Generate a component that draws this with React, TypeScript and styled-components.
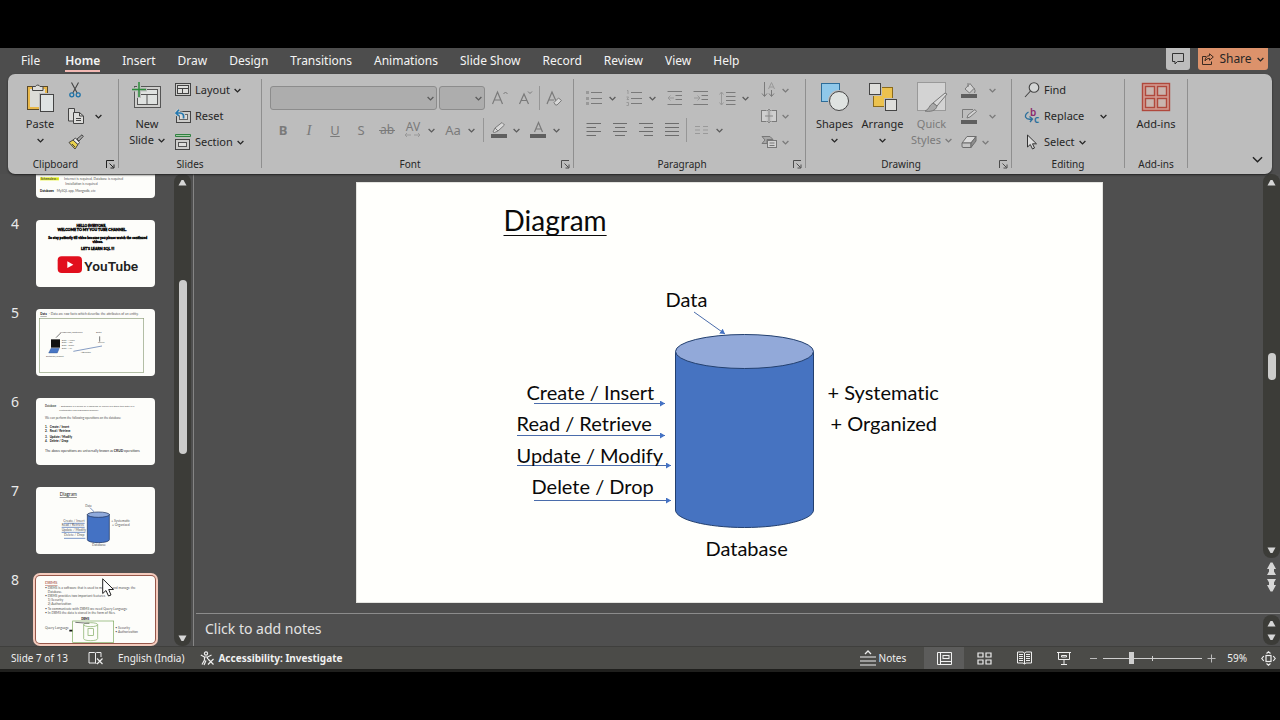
import React from "react";
import styled, { createGlobalStyle, css } from "styled-components";

const Global = createGlobalStyle`
  * { box-sizing: border-box; }
  body { margin: 0; background: #000; }
  button, select, input, textarea { font: inherit; color: inherit; margin: 0; }
`;

const ui = `"Noto Sans", "Open Sans", sans-serif`;
const ink = "#262626";
const dim = "#7a7a7a";

/* ---------- frame ---------- */

const Frame = styled.div`
  height: 100vh;
  min-height: 560px;
  padding: 48px 0;
  background: #000;
  display: flex;
  flex-direction: column;
  font-family: ${ui};
  font-size: 11px;
  color: ${ink};
`;

const TabBar = styled.nav`
  height: 26px;
  flex: none;
  display: flex;
  align-items: flex-start;
  padding: 0 12px 0 21px;
  background: #4d4d4d;
`;

const Tab = styled.a<{ $active?: boolean }>`
  color: #f4f4f4;
  text-decoration: none;
  font-size: 12px;
  line-height: 25px;
  margin-right: 22px;
  ${(p) =>
    p.$active &&
    css`
      font-weight: 600;
      line-height: 19px;
      padding-top: 3px;
      border-bottom: 2px solid #f3b9b4;
      margin-left: 3px;
    `}
`;

const TabActions = styled.div`
  margin-left: auto;
  display: flex;
  gap: 8px;
`;

const TopButton = styled.button<{ $accent?: boolean }>`
  height: 22px;
  border: 0;
  border-radius: 0 0 3px 3px;
  padding: 0 4px;
  min-width: ${(p) => (p.$accent ? 70 : 24)}px;
  display: flex;
  align-items: center;
  justify-content: center;
  gap: 5px;
  font-size: 12px;
  line-height: 22px;
  background: ${(p) => (p.$accent ? "#dc926b" : "#bdbdbd")};
`;

/* ---------- ribbon ---------- */

const Ribbon = styled.section`
  height: 100px;
  flex: none;
  margin: 0 8px;
  padding: 3px 0 1px;
  display: flex;
  background: #bdbdbd;
  border-radius: 7px;
  box-shadow: 0 1px 2px #222;
  position: relative;
  z-index: 2;
`;

const RibbonBack = styled.div`
  background: #4d4d4d;
  flex: none;
`;

const Group = styled.div<{ $w: number }>`
  width: ${(p) => p.$w}px;
  flex: none;
  display: flex;
  flex-direction: column;
`;

const GroupBody = styled.div<{ $pad?: number }>`
  height: 78px;
  display: flex;
  padding-left: ${(p) => p.$pad ?? 0}px;
`;

const GroupFooter = styled.div`
  height: 18px;
  display: flex;
  align-items: center;
`;

const GroupName = styled.span`
  flex: 1;
  text-align: center;
  font-size: 10px;
  line-height: 18px;
`;

const Launcher = styled.button`
  width: 15px;
  height: 16px;
  padding: 0;
  border: 0;
  background: none;
  display: flex;
  align-items: center;
  justify-content: center;
`;

const Divider = styled.div`
  width: 1px;
  flex: none;
  height: 89px;
  margin-top: 2px;
  background: #8f8f8f;
`;

const BigButton = styled.button<{ $w: number; $dim?: boolean }>`
  width: ${(p) => p.$w}px;
  border: 0;
  background: none;
  padding: 5px 0 0;
  display: flex;
  flex-direction: column;
  align-items: center;
  line-height: 16px;
  color: ${(p) => (p.$dim ? dim : ink)};
  svg:first-child { margin-bottom: 4px; }
`;

const BigLine = styled.span`
  height: 16px;
  display: flex;
  align-items: center;
  gap: 4px;
  svg:first-child { margin-bottom: 0; }
`;

const Stack = styled.div<{ $left?: number }>`
  display: flex;
  flex-direction: column;
  margin-left: ${(p) => p.$left ?? 0}px;
`;

const Row = styled.button<{ $gap?: number; $dim?: boolean }>`
  height: 26px;
  border: 0;
  padding: 0;
  background: none;
  display: flex;
  align-items: center;
  gap: ${(p) => p.$gap ?? 4}px;
  line-height: 16px;
  color: ${(p) => (p.$dim ? dim : ink)};
`;

const ToolRows = styled.div`
  display: flex;
  flex-direction: column;
  padding-top: 5px;
`;

const ToolRow = styled.div`
  height: 32px;
  display: flex;
  align-items: center;
`;

const Tool = styled.button<{ $left?: number }>`
  min-width: 26px;
  height: 26px;
  margin-left: ${(p) => p.$left ?? 0}px;
  padding: 0;
  border: 0;
  background: none;
  color: ${dim};
  display: flex;
  align-items: center;
  justify-content: center;
`;

const ToolText = styled.span<{ $bold?: boolean; $italic?: boolean; $line?: string }>`
  font-size: ${(p) => (p.$italic ? 15 : 13)}px;
  line-height: 16px;
  font-weight: ${(p) => (p.$bold ? 700 : 400)};
  font-style: ${(p) => (p.$italic ? "italic" : "normal")};
  font-family: ${(p) => (p.$italic ? `"Liberation Serif", serif` : ui)};
  text-decoration: ${(p) => p.$line ?? "none"};
`;

const Drop = styled.button`
  width: 10px;
  height: 26px;
  border: 0;
  padding: 0;
  background: none;
  color: #5c5c5c;
  display: flex;
  align-items: center;
  justify-content: center;
`;

const MiniRule = styled.div<{ $left: number }>`
  width: 1px;
  height: 24px;
  background: #969696;
  margin: 0 1px 0 ${(p) => p.$left}px;
`;

const Combo = styled.label<{ $w: number }>`
  width: ${(p) => p.$w}px;
  height: 24px;
  margin-right: 2px;
  border: 1px solid #8c8c8c;
  border-radius: 3px;
  background: #adadad;
  display: flex;
  align-items: center;
  padding-right: 2px;
  color: #5c5c5c;
  select {
    appearance: none;
    flex: 1;
    min-width: 0;
    border: 0;
    background: none;
    height: 20px;
  }
`;

const Collapse = styled.button`
  margin: auto 8px 6px auto;
  border: 0;
  padding: 0;
  background: none;
  width: 14px;
  height: 14px;
  color: #222;
`;

/* ---------- workspace ---------- */

const Workspace = styled.main`
  flex: 1;
  min-height: 0;
  display: flex;
  background: #4f4f4f;
`;

const SlidePane = styled.aside`
  width: 194px;
  flex: none;
  display: flex;
  border-right: 1px solid #858585;
`;

const ThumbList = styled.ol`
  flex: 1;
  margin: 0;
  padding: 0 0 3px 11px;
  list-style: none;
  display: flex;
  flex-direction: column;
  justify-content: flex-end;
  gap: 22px;
  overflow: hidden;
`;

const ThumbItem = styled.li`
  flex: none;
  display: flex;
  gap: 15px;
  position: relative;
`;

const ThumbNo = styled.span`
  width: 10px;
  font-size: 14px;
  line-height: 7px;
  color: #eaeaea;
`;

const Thumb = styled.a<{ $on?: boolean }>`
  display: block;
  width: 119px;
  height: 67px;
  background: #fdfdfa;
  border-radius: 4px;
  overflow: hidden;
  ${(p) => p.$on && "box-shadow: 0 0 0 1px #96574a, 0 0 0 3px #f4cbbd;"}
  svg { display: block; }
`;

const Pointer = styled.svg`
  position: absolute;
  left: 91px;
  top: 2px;
`;

const ScrollTrack = styled.div<{ $w: number }>`
  width: ${(p) => p.$w}px;
  flex: 1;
  min-height: 0;
  background: #3c3c38;
  border-radius: 8px;
  display: flex;
  flex-direction: column;
  align-items: center;
  justify-content: space-between;
  padding: 4px 0 3px;
`;

const ScrollArrow = styled.button<{ $tall?: boolean }>`
  width: 12px;
  height: ${(p) => (p.$tall ? 13 : 9)}px;
  border: 0;
  padding: 0;
  background: none;
  color: #d6d6d6;
  display: flex;
  align-items: center;
  justify-content: center;
`;

const ScrollThumb = styled.div<{ $h: number }>`
  width: 8px;
  height: ${(p) => p.$h}px;
  border-radius: 4px;
  background: #cccccb;
`;

const LeftScroll = styled.div`
  width: 17px;
  margin-right: 2px;
  display: flex;
`;

const Spring = styled.div<{ $n: number }>`
  flex: ${(p) => p.$n};
`;

const Editor = styled.div`
  flex: 1;
  min-width: 0;
  display: flex;
  flex-direction: column;
`;

const Stage = styled.div`
  flex: 1;
  min-height: 0;
  display: flex;
`;

const StageArea = styled.div`
  flex: 1;
  display: flex;
  justify-content: center;
  padding: 8px 0 0 1px;
`;

const StageScroll = styled.div`
  width: 17px;
  display: flex;
  flex-direction: column;
  align-items: center;
  gap: 4px;
  padding-bottom: 21px;
`;

const Notes = styled.div`
  height: 33px;
  flex: none;
  border-top: 1px solid #8c8c8c;
  margin-left: 2px;
  display: flex;
  align-items: stretch;
  textarea {
    flex: 1;
    resize: none;
    border: 0;
    outline: 0;
    background: none;
    padding: 4px 9px;
    font-size: 14px;
    line-height: 22px;
    overflow: hidden;
  }
  textarea::placeholder { color: #e3e3e3; opacity: 1; }
`;

const NotesScroll = styled.div`
  width: 17px;
  display: flex;
  padding: 1px 0;
`;

/* ---------- slide ---------- */

const Slide = styled.article`
  width: 747px;
  height: 421px;
  flex: none;
  position: relative;
  background: #fffffc;
  border: 1px solid #e4e4e0;
  color: #0a0a0a;
  font-family: Lato, sans-serif;
  font-variant-ligatures: none;
`;

const SlideArt = styled.svg`
  position: absolute;
  left: -1px;
  top: -1px;
`;

const TextBox = styled.p<{ $x: number; $y: number }>`
  position: absolute;
  left: ${(p) => p.$x}px;
  top: ${(p) => p.$y}px;
  margin: 0;
  font-size: 20px;
  line-height: 24px;
  white-space: nowrap;
`;

const SlideTitle = styled.h1`
  position: absolute;
  left: 147px;
  top: 20px;
  margin: 0;
  font-size: 28px;
  line-height: 34px;
  font-weight: 400;
  text-decoration: underline 1px;
  text-decoration-skip-ink: none;
  text-underline-offset: 4px;
`;

/* ---------- status bar ---------- */

const StatusBar = styled.footer`
  height: 26px;
  flex: none;
  border-top: 1px solid #3f3f3d;
  border-bottom: 3px solid #1f1f1d;
  background: #4b4b48;
  color: #f0f0f0;
  font-size: 10px;
  display: flex;
  align-items: center;
  padding: 0 4px 0 11px;
`;

const StatusItem = styled.button<{ $left?: number; $right?: number; $bold?: boolean }>`
  border: 0;
  padding: 0;
  background: none;
  margin-left: ${(p) => p.$left ?? 0}px;
  margin-right: ${(p) => p.$right ?? 0}px;
  font-weight: ${(p) => (p.$bold ? 700 : 400)};
  display: flex;
  align-items: center;
  gap: 3px;
`;

const ViewButton = styled.button<{ $on?: boolean }>`
  width: 40px;
  height: 22px;
  border: 0;
  padding: 0;
  background: ${(p) => (p.$on ? "#5c5c5b" : "none")};
  display: flex;
  align-items: center;
  justify-content: center;
`;

const Zoom = styled.input`
  appearance: none;
  width: 99px;
  height: 14px;
  margin: 0 5px;
  background:
    linear-gradient(#cfcfcf, #cfcfcf) 49px 50% / 1px 5px no-repeat,
    linear-gradient(#cfcfcf, #cfcfcf) 0 50% / 100% 1px no-repeat;
  &::-webkit-slider-thumb {
    appearance: none;
    width: 5px;
    height: 12px;
    background: #cfcfcf;
  }
`;

/* ---------- icons ---------- */

const Chevron = ({ size = 7 }: { size?: number }) => (
  <svg width={size} height={size} viewBox="0 0 7 7" fill="none" stroke="currentColor" strokeWidth={size > 7 ? 0.9 : 1.3}>
    <path d="M0.6 2 L3.5 4.9 L6.4 2" />
  </svg>
);

const LaunchIcon = ({ c = "#4c4c4c" }: { c?: string }) => (
  <svg width="9" height="9" viewBox="0 0 9 9" fill="none" stroke={c}>
    <path d="M0.5 8V0.5H8 M3.5 3.5L7.5 7.5 M8 4.5V8H4.5" />
  </svg>
);

const PasteIcon = () => (
  <svg width="30" height="30" viewBox="0 0 30 30" fill="none">
    <rect x="2.5" y="4.5" width="20" height="23" fill="#e9b84a" stroke="#5a4a2a" />
    <rect x="5" y="7" width="15" height="18" fill="#dcdcd8" />
    <path d="M7.5 8.5V4.5H10.5A2.5 2.5 0 0 1 15 4.5H18V8.5Z" fill="#dededb" stroke="#444" />
    <rect x="14" y="11" width="15" height="19" fill="#bdbdbd" />
    <rect x="15.5" y="12.5" width="13" height="17" fill="#dfe3e3" stroke="#444" />
  </svg>
);

const CutIcon = () => (
  <svg width="14" height="18" viewBox="0 0 14 18" fill="none">
    <path d="M3.5 1.5L9.2 12 M10.5 1.5L4.800 12" stroke="#444" strokeWidth="1.1" />
    <circle cx="3.8" cy="13.8" r="2" stroke="#1f73a8" strokeWidth="1.3" />
    <circle cx="10.2" cy="13.8" r="2" stroke="#1f73a8" strokeWidth="1.3" />
  </svg>
);

const CopyIcon = () => (
  <svg width="16" height="16" viewBox="0 0 16 16" fill="#dcdcda" stroke="#444">
    <path d="M0.5 0.5H6.5V13H0.5Z" />
    <path d="M5.500 4.500H11.500L15.500 8V15.500H5.500Z" />
    <path d="M11.500 4.500V8H15.500 M8 10.500H13 M8 12.500H13" fill="none" />
  </svg>
);

const BrushIcon = () => (
  <svg width="16" height="16" viewBox="0 0 16 16" fill="none" stroke="#444">
    <path d="M1 8.500L5 6L10 10.500L7 15Z" fill="#e8d04c" />
    <path d="M5 6L7.500 4L11.500 8.500L10 10.500Z" fill="#eee" />
    <path d="M9 5L14 0.800L15.300 2.300L11 7Z" fill="#aaa" />
    <path d="M4 10L7 13" />
  </svg>
);

const NewSlideIcon = () => (
  <svg width="32" height="30" viewBox="0 0 32 30" fill="none">
    <rect x="3.500" y="4.500" width="26" height="21" fill="#cfcfcd" stroke="#555" />
    <rect x="6.500" y="7.500" width="20" height="15" fill="#dfe2e0" stroke="#555" />
    <path d="M6.500 12.500H26.500 M16 12.500V22.500" stroke="#555" />
    <path d="M8 0V16 M0 7.500H16" stroke="#bdbdbd" strokeWidth="4" />
    <path d="M8 0V15 M1 7.500H15" stroke="#2b8c3a" strokeWidth="1.500" />
  </svg>
);

const LayoutIcon = () => (
  <svg width="16" height="14" viewBox="0 0 16 14" fill="none" stroke="#444">
    <rect x="0.500" y="0.500" width="15" height="12" fill="#cdcdcb" />
    <rect x="2.500" y="2.500" width="11" height="8" fill="#dededc" />
    <path d="M2.500 5.500H13.500 M7.500 5V10.500" />
  </svg>
);

const ResetIcon = () => (
  <svg width="16" height="15" viewBox="0 0 16 15" fill="none">
    <rect x="1.500" y="2.500" width="14" height="11" fill="#cdcdcb" stroke="#444" />
    <rect x="4.500" y="5.500" width="8" height="5" fill="#dededc" stroke="#666" />
    <path d="M4 0.800L1 4L4 7 M1 4H5C8 4 9 6 8.500 9.500" stroke="#cdcdcb" strokeWidth="3.500" />
    <path d="M4 0.800L1 4L4 7 M1 4H5C8 4 9 6 8.500 9.500" stroke="#2277b0" strokeWidth="1.600" />
  </svg>
);

const SectionIcon = () => (
  <svg width="16" height="16" viewBox="0 0 16 16" fill="none">
    <path d="M0.500 0.500H15.500V2.500H0.500Z" fill="#a5c9a5" stroke="#2f8040" />
    <rect x="0.500" y="5.500" width="14" height="10" fill="#cdcdcb" stroke="#444" />
    <rect x="3.500" y="8.500" width="8" height="4" fill="#dededc" stroke="#555" />
  </svg>
);

const GrowIcon = ({ down }: { down?: boolean }) => (
  <svg width="16" height="16" viewBox="0 0 16 16" fill="none" stroke={dim}>
    {down ? (
      <path d="M1.500 14L6 4L10.500 14 M3 10.500H9" strokeWidth="1.200" />
    ) : (
      <path d="M0.500 14L5.500 2L10.500 14 M2.300 10H8.700" strokeWidth="1.200" />
    )}
    <path d={down ? "M10 1.500L12 3.500L14 1.500" : "M11.500 4L13.500 2L15.500 4"} />
  </svg>
);

const ClearIcon = () => (
  <svg width="17" height="17" viewBox="0 0 17 17" fill="none" stroke={dim}>
    <path d="M1 14L6 2L10 11 M2.800 10H8" strokeWidth="1.200" />
    <path d="M8 12.500L12.500 8L15.500 10.500L11 15H9.500Z" fill="#d8d8d8" />
  </svg>
);

const StrikeIcon = () => (
  <svg width="18" height="22" viewBox="0 0 18 22">
    <text x="9" y="15" textAnchor="middle" fontSize="12" fill={dim}>ab</text>
    <path d="M1 11.500H17" stroke={dim} />
  </svg>
);

const SpacingIcon = () => (
  <svg width="18" height="24" viewBox="0 0 18 24">
    <text x="9" y="13" textAnchor="middle" fontSize="12" fill={dim}>AV</text>
    <path d="M1 17H7 M3 15L1 17L3 19 M10 17H16 M14 15L16 17L14 19" stroke="#999" fill="none" />
  </svg>
);

const HighlightIcon = () => (
  <svg width="17" height="18" viewBox="0 0 17 18" fill="none">
    <path d="M3 11L5 7L12 1.500L14.500 4L8 10L4.500 11.500Z" fill="#d8d8d8" stroke={dim} />
    <path d="M5 7L8 10" stroke={dim} />
    <rect x="1" y="13" width="16" height="4" fill="#5f5f5f" />
  </svg>
);

const FontColorIcon = () => (
  <svg width="17" height="18" viewBox="0 0 17 18" fill="none">
    <path d="M4.500 11L8.500 1.500L12.500 11 M6 8H11" stroke={dim} strokeWidth="1.200" />
    <rect x="0" y="13" width="16" height="4" fill="#5f5f5f" />
  </svg>
);

const BulletsIcon = ({ numbers }: { numbers?: boolean }) => (
  <svg width="16" height="16" viewBox="0 0 16 16" fill="none" stroke={dim}>
    <path d="M5 2.500H16 M5 8.500H16 M5 13.500H16" />
    {numbers ? (
      <path d="M1 0.500H2V4 M0.500 7H2.500L1 9.500H3 M0.500 12.500H2.500V15.500H0.500" stroke="#999" />
    ) : (
      <path d="M0 2.500H3 M0 8.500H3 M0 13.500H3" strokeWidth="3" stroke="#999" />
    )}
  </svg>
);

const IndentIcon = ({ out }: { out?: boolean }) => (
  <svg width="16" height="16" viewBox="0 0 16 16" fill="none" stroke={dim}>
    <path d="M0.500 1.500H15 M8.500 5.500H15 M8.500 9.500H15 M0.500 14.500H15" />
    <path d={out ? "M7 8H1 M3.500 5.500L1 8L3.500 10.500" : "M1 8H7 M4.500 5.500L7 8L4.500 10.500"} stroke="#999" />
  </svg>
);

const LineSpaceIcon = () => (
  <svg width="17" height="17" viewBox="0 0 17 17" fill="none" stroke={dim}>
    <path d="M7 2.500H16.500 M7 6.500H16.500 M7 10.500H16.500 M7 14.500H16.500" />
    <path d="M2.500 2V15 M0.500 4.500L2.500 2L4.500 4.500 M0.500 12.500L2.500 15L4.500 12.500" stroke="#999" />
  </svg>
);

const AlignIcon = ({ d }: { d: string }) => (
  <svg width="16" height="16" viewBox="0 0 16 16" fill="none" stroke="#6c6c6c">
    <path d={d} />
  </svg>
);

const ColumnsIcon = () => (
  <svg width="13" height="10" viewBox="0 0 13 10" stroke="#999">
    <path d="M0 1.500H5 M0 5H5 M0 8.500H5 M8 1.500H13 M8 5H13 M8 8.500H13" />
  </svg>
);

const TextDirIcon = () => (
  <svg width="16" height="18" viewBox="0 0 16 18" fill="none" stroke={dim}>
    <path d="M3.500 1V15 M1 12.500L3.500 15.500L6 12.500 M10.500 9V15 M8 12.500L10.500 15.500L13 12.500" />
    <path d="M7.500 8L10.500 1.500L13.500 8 M8.500 6H12.500" stroke="#999" />
  </svg>
);

const AlignTextIcon = () => (
  <svg width="17" height="16" viewBox="0 0 17 16" fill="none" stroke={dim}>
    <rect x="0.500" y="2.500" width="15" height="11" fill="#cfcfcf" />
    <path d="M8 1V15" stroke="#c4c4c4" strokeWidth="5" />
    <path d="M4 8H12 M8 1V15 M6 3L8 1L10 3 M6 13L8 15L10 13" stroke="#888" />
  </svg>
);

const SmartArtIcon = () => (
  <svg width="17" height="14" viewBox="0 0 17 14" fill="none" stroke="#777">
    <path d="M1 1.500H9L12 4.500H6V8.500H1L4 5Z" fill="#a8a8a8" />
    <rect x="6.500" y="5.500" width="9" height="7" fill="#d2d2d2" />
    <path d="M8.500 8H13.500 M8.500 10.500H13.500" />
  </svg>
);

const ShapesIcon = () => (
  <svg width="30" height="30" viewBox="0 0 30 30">
    <rect x="1.500" y="1.500" width="18" height="18" fill="#8fc8ea" stroke="#2d6c98" />
    <circle cx="19" cy="19" r="11" fill="#bdbdbd" />
    <circle cx="19" cy="19" r="9.500" fill="#dfe3e1" stroke="#444" />
  </svg>
);

const ArrangeIcon = () => (
  <svg width="30" height="30" viewBox="0 0 30 30">
    <rect x="5.500" y="5.500" width="19" height="19" fill="#ecc24e" stroke="#8a6a1c" />
    <rect x="0" y="0" width="14" height="14" fill="#bdbdbd" />
    <rect x="1.500" y="1.500" width="11" height="11" fill="#dededb" stroke="#444" />
    <rect x="16" y="16" width="14" height="14" fill="#bdbdbd" />
    <rect x="17.500" y="17.500" width="11" height="11" fill="#dededb" stroke="#444" />
  </svg>
);

const QuickStylesIcon = () => (
  <svg width="32" height="30" viewBox="0 0 32 30">
    <rect x="1.500" y="0.500" width="28" height="28" fill="#d3d3d3" stroke="#999" />
    <path d="M29 11L31 12L21 24L17 21Z" fill="#d8d8d8" stroke="#777" />
    <path d="M17 21L21 24C20 29 14 30 9 29C13 28 13 23 17 21Z" fill="#a9a9a9" stroke="#777" />
  </svg>
);

const FillIcon = () => (
  <svg width="17" height="17" viewBox="0 0 17 17">
    <path d="M4 7L9 1.500L13 6.500L8.500 11Z M7 1V5" fill="#d2d2d2" stroke={dim} />
    <path d="M13 6Q15 9 13.500 11" fill="none" stroke={dim} />
    <rect x="0" y="12" width="16" height="4" fill="#5f5f5f" />
  </svg>
);

const OutlineIcon = () => (
  <svg width="17" height="17" viewBox="0 0 17 17" fill="none">
    <path d="M12 1.500H1.500V10" stroke={dim} />
    <path d="M6 10L7 7L14 1.500L15.500 3.500L9 9Z" fill="#d2d2d2" stroke={dim} />
    <rect x="0" y="12" width="16" height="4" fill="#5f5f5f" />
  </svg>
);

const EffectsIcon = () => (
  <svg width="17" height="14" viewBox="0 0 17 14" stroke="#6d6d6d">
    <path d="M6 1.500H15L10 8H1Z" fill="#dadada" />
    <path d="M1 8H10V12.500H2Q1 12.500 1 11Z" fill="#c4c4c4" />
    <path d="M10 8L15 1.500V6L10 12.500Z" fill="#8d8d8d" />
  </svg>
);

const FindIcon = () => (
  <svg width="16" height="16" viewBox="0 0 16 16" fill="#d4d6d6" stroke="#444" strokeWidth="1.100">
    <circle cx="10" cy="5.500" r="4.800" />
    <path d="M6.500 9L1 15" />
  </svg>
);

const ReplaceIcon = () => (
  <svg width="16" height="24" viewBox="0 0 16 24">
    <text x="6" y="12" fontSize="10" fontWeight="600" fill="#8c2a6c">b</text>
    <text x="10" y="19" fontSize="10" fontWeight="600" fill="#2a6f9c">c</text>
    <path d="M4.500 8Q1 10 1.500 13Q3 16 8 15 M5.500 12.500L8.500 15L6 18" fill="none" stroke="#2a6f9c" strokeWidth="1.300" />
  </svg>
);

const SelectIcon = () => (
  <svg width="16" height="16" viewBox="0 0 16 16">
    <path d="M3.500 1V13L6.300 10.500L8.500 15L10.500 14L8.500 9.800H12.500Z" fill="#dcdcdc" stroke="#333" />
  </svg>
);

const AddinsIcon = () => (
  <svg width="30" height="30" viewBox="0 0 30 30" fill="none" stroke="#b0483c">
    <rect x="1.500" y="1.500" width="27" height="27" fill="#d29a90" strokeWidth="1.400" />
    <g fill="#c9b4ae" strokeWidth="1.400">
      <rect x="4.500" y="4.500" width="9" height="9" />
      <rect x="16.500" y="4.500" width="9" height="9" />
      <rect x="4.500" y="16.500" width="9" height="9" />
      <rect x="16.500" y="16.500" width="9" height="9" />
    </g>
  </svg>
);

const CommentIcon = () => (
  <svg width="12" height="12" viewBox="0 0 12 12" fill="none" stroke="#333">
    <path d="M0.500 0.500H11.500V8.500H5.500L3 11V8.500H0.500Z" />
  </svg>
);

const ShareIcon = () => (
  <svg width="12" height="12" viewBox="0 0 12 12" fill="none" stroke="#3a2a20">
    <path d="M4 3.500H0.500V11.500H9.500V8.500" />
    <path d="M7.500 0.800L11.300 4L7.500 7.200V5.300Q4.500 5.300 3 8Q3.200 3 7.500 2.700Z" />
  </svg>
);

const Tri = ({ down }: { down?: boolean }) => (
  <svg width="9" height="7" viewBox="0 0 9 7" fill="currentColor">
    <path d={down ? "M0.500 0.500H8.500L5.500 6H3.500Z" : "M0.500 6.500H8.500L5.500 1H3.500Z"} />
  </svg>
);

const DoubleTri = ({ down }: { down?: boolean }) => (
  <svg width="11" height="13" viewBox="0 0 11 13" fill="currentColor">
    <path
      d={
        down
          ? "M1 0H10L8 3.500V6H10L6.500 12.500H4.500L1 6H3V3.500Z"
          : "M1 13H10L8 9.500V7H10L6.500 0.500H4.500L1 7H3V9.500Z"
      }
    />
  </svg>
);

const ProofIcon = () => (
  <svg width="16" height="14" viewBox="0 0 16 14" fill="none" stroke="#eee">
    <path d="M7.500 12V2L6.500 1.500H1V12H7.500L8.500 13 M7.500 2L8.500 1.500H13V6" />
    <path d="M9 7.500L14.500 13 M14.500 7.500L9 13" strokeWidth="1.200" />
  </svg>
);

const AccessIcon = () => (
  <svg width="15" height="15" viewBox="0 0 15 15" fill="none" stroke="#eee" strokeWidth="1.200">
    <circle cx="6" cy="2.500" r="1.600" />
    <path d="M0.800 4L4.500 6V9L2 13.500 M11.500 4L7.500 6V8 M4.500 6H7.500 M6 9.500L4 14" />
    <path d="M8 8L13.500 13.500 M13.500 8L8 13.500" />
  </svg>
);

const NotesIcon = () => (
  <svg width="16" height="16" viewBox="0 0 16 16" fill="none" stroke="#eee">
    <path d="M5 4L8 1L11 4" strokeWidth="1.300" />
    <path d="M0 7H16 M0 11H16 M0 15H16" strokeWidth="1.200" />
  </svg>
);

const NormalIcon = () => (
  <svg width="15" height="13" viewBox="0 0 15 13" fill="none" stroke="#f2f2f2">
    <path d="M0.500 0.500H14.500V12.500H0.500Z M3.500 0.500V12.500 M3.500 9.500H14.500" />
    <rect x="6" y="3.500" width="6" height="3" />
  </svg>
);

const SorterIcon = () => (
  <svg width="15" height="13" viewBox="0 0 15 13" fill="none" stroke="#eee" strokeWidth="1.200">
    <path d="M1 1H6V5H1Z M9 1H14V5H9Z M1 8H6V12H1Z M9 8H14V12H9Z" />
  </svg>
);

const ReadIcon = () => (
  <svg width="15" height="14" viewBox="0 0 15 14" fill="none" stroke="#eee">
    <path d="M7.500 2V13 M0.500 1H6L7.500 2L9 1H14.500V12H9L7.500 13L6 12H0.500Z" />
    <path d="M2 3.500H6 M2 5.500H6 M2 7.500H6 M2 9.500H6 M9 3.500H13 M9 5.500H13 M9 7.500H13 M9 9.500H13" />
  </svg>
);

const ShowIcon = () => (
  <svg width="14" height="13" viewBox="0 0 14 13" fill="none" stroke="#eee">
    <path d="M0 0.500H14 M1.500 0.500V7.500H12.500V0.500 M7 7.500V12 M4 12.500H10 M4.500 3.500H9.500V5H4.500Z" />
  </svg>
);

const FitIcon = () => (
  <svg width="15" height="15" viewBox="0 0 15 15" fill="none" stroke="#eee" strokeWidth="1.200">
    <rect x="5" y="4.500" width="5" height="6" />
    <path d="M5.500 2.500L7.500 0.800L9.500 2.500 M5.500 12.500L7.500 14.200L9.500 12.500 M2.800 5L0.800 7.500L2.800 10 M12.200 5L14.200 7.500L12.200 10" />
  </svg>
);

/* ---------- slide previews ---------- */

const Preview = ({ children }: { children: React.ReactNode }) => (
  <svg width="119" height="67" viewBox="0 0 357 201" fontFamily="Lato, sans-serif" fontSize="9" fill="#555">
    {children}
  </svg>
);

const Preview3 = () => (
  <Preview>
    <rect x="12" y="139" width="57" height="9" fill="#e8f21c" />
    <text x="14" y="147" fontWeight="700" fill="#555">Schemaless :</text>
    <text x="84" y="147" fontSize="10">Internet is required, Database is required</text>
    <text x="88" y="161" fontSize="10">Installation is required</text>
    <text x="12" y="184" fontWeight="900" fill="#111">Databases</text>
    <text x="62" y="184" fontSize="10">MySQL app,  Mongodb, etc</text>
  </Preview>
);

const Preview4 = () => (
  <Preview>
    <g fontWeight="900" fill="#000" stroke="#000" textAnchor="middle" fontSize="10">
      <text x="166" y="22">HELLO EVERYONE,</text>
      <text x="168" y="34" fontSize="11">WELCOME TO MY YOU TUBE CHANNEL.</text>
      <text x="185" y="56">So stay patiently till video because you please watch the continued</text>
      <text x="185" y="68">videos.</text>
      <text x="185" y="91" fontSize="11">LET'S LEARN SQL !!!</text>
    </g>
    <rect x="65" y="109" width="73" height="50" rx="12" fill="#e10f1d" />
    <path d="M94 124L112 134L94 144Z" fill="#fff" />
    <text x="145" y="152" fontFamily="Roboto, sans-serif" fontWeight="600" fontSize="41" fill="#222">
      YouTube
    </text>
  </Preview>
);

const Preview5 = () => (
  <Preview>
    <text x="13" y="18" fontWeight="900" fill="#222" textDecoration="underline">Data</text>
    <text x="38" y="18" fontSize="10">- Data are raw facts which describe the attributes of an entity.</text>
    <rect x="10" y="28" width="313" height="162" fill="none" stroke="#8fa07c" strokeWidth="2" />
    <text x="72" y="73" fontSize="8">Programs/Software</text>
    <text x="180" y="73" fontSize="8">Data</text>
    <path d="M74 72L60 86 M191 82V98" stroke="#333" strokeWidth="2" />
    <rect x="45" y="91" width="27" height="25" fill="#111" />
    <path d="M45 118H70L64 132H38Z" fill="#4876c4" stroke="#274a86" />
    <g fontSize="7">
      <text x="77" y="96">Data - Name</text>
      <text x="77" y="103">Data - Age</text>
      <text x="77" y="112">Data - Email</text>
      <text x="77" y="119">Data - No.</text>
      <text x="186" y="103">Server</text>
      <text x="134" y="131">Attributes</text>
    </g>
    <path d="M198 111L112 127" stroke="#4b6ca8" strokeWidth="2" />
    <text x="30" y="145" fontSize="7">Database/Object</text>
  </Preview>
);

const Preview6 = () => (
  <Preview>
    <text x="27" y="28" fontWeight="900" fontSize="8">Database</text>
    <text x="70" y="28" fontSize="8">- Database is a place or a medium in which we store the data in a</text>
    <text x="70" y="38" fontSize="8">systematic and organized manner.</text>
    <text x="27" y="63">We can perform the following operations on the database</text>
    <g fontWeight="900" fill="#222">
      <text x="27" y="89">1.</text>
      <text x="41" y="89">Create / Insert</text>
      <text x="27" y="103">2.</text>
      <text x="41" y="103">Read / Retrieve</text>
      <text x="27" y="119">3.</text>
      <text x="41" y="119">Update / Modify</text>
      <text x="27" y="133">4.</text>
      <text x="41" y="133">Delete / Drop</text>
    </g>
    <text x="27" y="161" fill="#333" fontSize="10">
      The above operations are universally known as <tspan fontWeight="900">CRUD</tspan> operations
    </text>
  </Preview>
);

const Preview7 = () => (
  <Preview>
    <text x="71" y="27" fontSize="14" fill="#222" textDecoration="underline">Diagram</text>
    <path d="M154 82V158C154 170 220 170 220 158V82Z" fill="#4472c4" stroke="#1c2f55" strokeWidth="2" />
    <ellipse cx="187" cy="83" rx="33" ry="8" fill="#8faadc" stroke="#1c2f55" strokeWidth="2" />
    <path d="M162 62L174 74 M84 109H146 M77 121H146 M77 136H148 M84 154H148" stroke="#3a63ae" strokeWidth="2" />
    <text x="148" y="60">Data</text>
    <g fontSize="10">
      <text x="82" y="104">Create / Insert</text>
      <text x="77" y="118">Read / Retrieve</text>
      <text x="77" y="133">Update / Modify</text>
      <text x="84" y="148">Delete / Drop</text>
      <text x="226" y="104">+ Systematic</text>
      <text x="228" y="118">+ Organized</text>
      <text x="168" y="177">Database</text>
    </g>
  </Preview>
);

const Preview8 = () => (
  <Preview>
    <text x="27" y="25" fontSize="13" fill="#a03a2c" textDecoration="underline">DBMS</text>
    <g fontSize="10">
      <text x="27" y="38">• DBMS is a software that is used to maintain and manage the</text>
      <text x="35" y="50">Database.</text>
      <text x="27" y="64">• DBMS provides two important features</text>
      <text x="35" y="75">1) Security</text>
      <text x="35" y="87">2) Authorization</text>
      <text x="27" y="101">• To communicate with DBMS we need Query Language</text>
      <text x="27" y="114">• In DBMS the data is stored in the form of files.</text>
      <text x="136" y="131" fontSize="8" fontWeight="900" fill="#222">DBMS</text>
      <text x="27" y="159">Query Language</text>
      <text x="238" y="159">• Security</text>
      <text x="238" y="171">• Authorization</text>
    </g>
    <path d="M100 164H110" stroke="#111" strokeWidth="5" />
    <rect x="110" y="135" width="123" height="64" fill="none" stroke="#7aa75a" strokeWidth="2" />
    <path d="M143 146V188C143 196 185 196 185 188V146" fill="none" stroke="#7aa75a" strokeWidth="2" />
    <ellipse cx="164" cy="146" rx="21" ry="6" fill="none" stroke="#7aa75a" strokeWidth="2" />
    <rect x="156" y="158" width="16" height="20" fill="none" stroke="#7aa75a" strokeWidth="2" />
    <path d="M118 139L160 142" stroke="#333" strokeWidth="2" />
  </Preview>
);

const previews = [
  { n: 3, View: Preview3 },
  { n: 4, View: Preview4 },
  { n: 5, View: Preview5 },
  { n: 6, View: Preview6 },
  { n: 7, View: Preview7 },
  { n: 8, View: Preview8 },
];

const labels: [string, number, number][] = [
  ["Data", 309, 104],
  ["Create / Insert", 170, 197],
  ["Read / Retrieve", 160, 228],
  ["Update / Modify", 160, 260],
  ["Delete / Drop", 175, 291],
  ["+ Systematic", 471, 197],
  ["+ Organized", 474, 228],
  ["Database", 349, 353],
];

const tabs = ["File", "Home", "Insert", "Draw", "Design", "Transitions", "Animations", "Slide Show", "Record", "Review", "View", "Help"];

const Footer = ({ name, launch }: { name: string; launch?: string }) => (
  <GroupFooter>
    <GroupName>{name}</GroupName>
    {launch && (
      <Launcher aria-label={`${name} settings`}>
        <LaunchIcon c={launch} />
      </Launcher>
    )}
  </GroupFooter>
);

export default function App() {
  return (
    <Frame>
      <Global />
      <TabBar>
        {tabs.map((t) => (
          <Tab key={t} href="#" $active={t === "Home"}>{t}</Tab>
        ))}
        <TabActions>
          <TopButton aria-label="Comments"><CommentIcon /></TopButton>
          <TopButton $accent><ShareIcon /> Share <Chevron /></TopButton>
        </TabActions>
      </TabBar>

      <RibbonBack>
        <Ribbon>
          <Group $w={110}>
            <GroupBody $pad={4}>
              <BigButton $w={56}>
                <PasteIcon />
                <BigLine>Paste</BigLine>
                <BigLine><Chevron /></BigLine>
              </BigButton>
              <Stack>
                <Row aria-label="Cut"><CutIcon /></Row>
                <Row aria-label="Copy" $gap={11}><CopyIcon /><Chevron /></Row>
                <Row aria-label="Format Painter"><BrushIcon /></Row>
              </Stack>
            </GroupBody>
            <Footer name="Clipboard" launch="#222" />
          </Group>
          <Divider />
          <Group $w={142}>
            <GroupBody $pad={4}>
              <BigButton $w={48}>
                <NewSlideIcon />
                <BigLine>New</BigLine>
                <BigLine>Slide <Chevron /></BigLine>
              </BigButton>
              <Stack $left={4}>
                <Row><LayoutIcon /> Layout <Chevron /></Row>
                <Row><ResetIcon /> Reset</Row>
                <Row><SectionIcon /> Section <Chevron /></Row>
              </Stack>
            </GroupBody>
            <Footer name="Slides" />
          </Group>
          <Divider />
          <Group $w={311}>
            <GroupBody $pad={8}>
              <ToolRows>
                <ToolRow>
                  <Combo $w={167}><select aria-label="Font" disabled /><Chevron /></Combo>
                  <Combo $w={46}><select aria-label="Font size" disabled /><Chevron /></Combo>
                  <Tool aria-label="Increase font size"><GrowIcon /></Tool>
                  <Tool aria-label="Decrease font size"><GrowIcon down /></Tool>
                  <MiniRule $left={0} />
                  <Tool aria-label="Clear formatting"><ClearIcon /></Tool>
                </ToolRow>
                <ToolRow>
                  <Tool><ToolText $bold>B</ToolText></Tool>
                  <Tool><ToolText $italic>I</ToolText></Tool>
                  <Tool><ToolText $line="underline">U</ToolText></Tool>
                  <Tool><ToolText>S</ToolText></Tool>
                  <Tool aria-label="Strikethrough"><StrikeIcon /></Tool>
                  <Tool aria-label="Character spacing"><SpacingIcon /></Tool>
                  <Drop aria-label="Spacing options"><Chevron /></Drop>
                  <Tool $left={4}><ToolText>Aa</ToolText></Tool>
                  <Drop aria-label="Case options"><Chevron /></Drop>
                  <MiniRule $left={7} />
                  <Tool aria-label="Highlight"><HighlightIcon /></Tool>
                  <Drop aria-label="Highlight colours"><Chevron /></Drop>
                  <Tool $left={4} aria-label="Font colour"><FontColorIcon /></Tool>
                  <Drop aria-label="Font colours"><Chevron /></Drop>
                </ToolRow>
              </ToolRows>
            </GroupBody>
            <Footer name="Font" launch="#4c4c4c" />
          </Group>
          <Divider />
          <Group $w={231}>
            <GroupBody $pad={7}>
              <ToolRows>
                <ToolRow>
                  <Tool aria-label="Bullets"><BulletsIcon /></Tool>
                  <Drop aria-label="Bullet styles"><Chevron /></Drop>
                  <Tool $left={4} aria-label="Numbering"><BulletsIcon numbers /></Tool>
                  <Drop aria-label="Numbering styles"><Chevron /></Drop>
                  <Tool $left={5} aria-label="Decrease indent"><IndentIcon out /></Tool>
                  <Tool aria-label="Increase indent"><IndentIcon /></Tool>
                  <Tool aria-label="Line spacing"><LineSpaceIcon /></Tool>
                  <Drop aria-label="Line spacing options"><Chevron /></Drop>
                </ToolRow>
                <ToolRow>
                  <Tool aria-label="Align left"><AlignIcon d="M0.5 1.500H15 M0.500 5.500H10 M0.500 9.500H15 M0.500 13.500H10" /></Tool>
                  <Tool aria-label="Centre"><AlignIcon d="M1 1.500H15 M3 5.500H13 M1 9.500H15 M3 13.500H13" /></Tool>
                  <Tool aria-label="Align right"><AlignIcon d="M1 1.500H15 M6 5.500H15 M1 9.500H15 M6 13.500H15" /></Tool>
                  <Tool aria-label="Justify"><AlignIcon d="M1 1.500H15 M1 5.500H15 M1 9.500H15 M1 13.500H15" /></Tool>
                  <MiniRule $left={1} />
                  <Tool aria-label="Columns"><ColumnsIcon /></Tool>
                  <Drop aria-label="Column options"><Chevron /></Drop>
                </ToolRow>
              </ToolRows>
              <Stack $left={11}>
                <Row $dim $gap={5} aria-label="Text direction"><TextDirIcon /><Chevron /></Row>
                <Row $dim aria-label="Align text"><AlignTextIcon /><Chevron /></Row>
                <Row $dim aria-label="Convert to SmartArt"><SmartArtIcon /><Chevron /></Row>
              </Stack>
            </GroupBody>
            <Footer name="Paragraph" launch="#4c4c4c" />
          </Group>
          <Divider />
          <Group $w={205}>
            <GroupBody $pad={5}>
              <BigButton $w={47}>
                <ShapesIcon />
                <BigLine>Shapes</BigLine>
                <BigLine><Chevron /></BigLine>
              </BigButton>
              <BigButton $w={49}>
                <ArrangeIcon />
                <BigLine>Arrange</BigLine>
                <BigLine><Chevron /></BigLine>
              </BigButton>
              <BigButton $w={49} $dim>
                <QuickStylesIcon />
                <BigLine>Quick</BigLine>
                <BigLine>Styles <Chevron /></BigLine>
              </BigButton>
              <Stack $left={5}>
                <Row $dim $gap={11} aria-label="Shape fill"><FillIcon /><Chevron /></Row>
                <Row $dim $gap={11} aria-label="Shape outline"><OutlineIcon /><Chevron /></Row>
                <Row $dim aria-label="Shape effects"><EffectsIcon /><Chevron /></Row>
              </Stack>
            </GroupBody>
            <Footer name="Drawing" launch="#4c4c4c" />
          </Group>
          <Divider />
          <Group $w={112}>
            <GroupBody $pad={12}>
              <Stack>
                <Row><FindIcon /> Find</Row>
                <Row><ReplaceIcon /> Replace <Spring $n={1} /><Spring $n={1} /><Spring $n={1} /><Chevron /></Row>
                <Row><SelectIcon /> Select <Chevron /></Row>
              </Stack>
            </GroupBody>
            <Footer name="Editing" />
          </Group>
          <Divider />
          <Group $w={62}>
            <GroupBody>
              <BigButton $w={62}>
                <AddinsIcon />
                <BigLine>Add-ins</BigLine>
              </BigButton>
            </GroupBody>
            <Footer name="Add-ins" />
          </Group>
          <Divider />
          <Collapse aria-label="Collapse ribbon"><Chevron size={11} /></Collapse>
        </Ribbon>
      </RibbonBack>

      <Workspace>
        <SlidePane>
          <ThumbList>
            {previews.map(({ n, View }) => (
              <ThumbItem key={n}>
                <ThumbNo>{n}</ThumbNo>
                <Thumb href="#" $on={n === 8} aria-label={`Slide ${n}`}><View /></Thumb>
                {n === 8 && (
                  <Pointer width="13" height="19" viewBox="0 0 13 19">
                    <path d="M0.700 0.800V15.500L4 12.500L6.500 18L9 17L6.700 11.500H11.500Z" fill="#fff" stroke="#222" />
                  </Pointer>
                )}
              </ThumbItem>
            ))}
          </ThumbList>
          <LeftScroll>
            <ScrollTrack $w={17}>
              <ScrollArrow aria-label="Scroll up"><Tri /></ScrollArrow>
              <Spring $n={92} />
              <ScrollThumb $h={174} />
              <Spring $n={179} />
              <ScrollArrow aria-label="Scroll down"><Tri down /></ScrollArrow>
            </ScrollTrack>
          </LeftScroll>
        </SlidePane>

        <Editor>
          <Stage>
            <StageArea>
              <Slide>
                <SlideArt width="747" height="421" viewBox="0 0 747 421">
                  <defs>
                    <marker id="tip" viewBox="0 0 5 6" refX="5" refY="3" markerWidth="5" markerHeight="6" orient="auto">
                      <path d="M0 0L5 3L0 6Z" fill="#4472c4" />
                    </marker>
                  </defs>
                  <path d="M319.500 170V328C319.500 337.500 350 345.500 388.500 345.500S457.500 337.500 457.500 328V170Z" fill="#4673c1" stroke="#23406f" />
                  <ellipse cx="388.500" cy="169.500" rx="69" ry="17" fill="#92a9d9" stroke="#23406f" />
                  <g stroke="#4a6cab" fill="none">
                    <path d="M338 130L369 152" markerEnd="url(#tip)" />
                    <path d="M178 221.500H309" markerEnd="url(#tip)" />
                    <path d="M161 253.500H309" markerEnd="url(#tip)" />
                    <path d="M161 283.500H315" markerEnd="url(#tip)" />
                    <path d="M178 318.500H315" markerEnd="url(#tip)" />
                  </g>
                </SlideArt>
                <SlideTitle>Diagram</SlideTitle>
                {labels.map(([text, x, y]) => (
                  <TextBox key={text} $x={x} $y={y}>{text}</TextBox>
                ))}
              </Slide>
            </StageArea>
            <StageScroll>
              <ScrollTrack $w={17}>
                <ScrollArrow aria-label="Scroll up"><Tri /></ScrollArrow>
                <Spring $n={165} />
                <ScrollThumb $h={27} />
                <Spring $n={166} />
                <ScrollArrow aria-label="Scroll down"><Tri down /></ScrollArrow>
              </ScrollTrack>
              <ScrollArrow $tall aria-label="Previous slide"><DoubleTri /></ScrollArrow>
              <ScrollArrow $tall aria-label="Next slide"><DoubleTri down /></ScrollArrow>
            </StageScroll>
          </Stage>
          <Notes>
            <textarea aria-label="Notes" placeholder="Click to add notes" />
            <NotesScroll>
              <ScrollTrack $w={17}>
                <ScrollArrow aria-label="Scroll notes up"><Tri /></ScrollArrow>
                <ScrollArrow aria-label="Scroll notes down"><Tri down /></ScrollArrow>
              </ScrollTrack>
            </NotesScroll>
          </Notes>
        </Editor>
      </Workspace>

      <StatusBar>
        <StatusItem>Slide 7 of 13</StatusItem>
        <StatusItem $left={20} aria-label="Spelling"><ProofIcon /></StatusItem>
        <StatusItem $left={14}>English (India)</StatusItem>
        <StatusItem $left={16} $bold><AccessIcon /> Accessibility: Investigate</StatusItem>
        <Spring $n={1} />
        <StatusItem $right={18}><NotesIcon /> Notes</StatusItem>
        <ViewButton $on aria-label="Normal view"><NormalIcon /></ViewButton>
        <ViewButton aria-label="Slide sorter"><SorterIcon /></ViewButton>
        <ViewButton aria-label="Reading view"><ReadIcon /></ViewButton>
        <ViewButton aria-label="Slide show"><ShowIcon /></ViewButton>
        <StatusItem $left={5} aria-label="Zoom out">
          <svg width="9" height="9" viewBox="0 0 9 9" stroke="#bbb"><path d="M1 4.500H8" /></svg>
        </StatusItem>
        <Zoom type="range" min={0} max={100} defaultValue={27} aria-label="Zoom" />
        <StatusItem aria-label="Zoom in">
          <svg width="9" height="9" viewBox="0 0 9 9" stroke="#bbb"><path d="M0.500 4.500H8.500 M4.500 0.500V8.500" /></svg>
        </StatusItem>
        <StatusItem $left={11}>59%</StatusItem>
        <StatusItem $left={14} aria-label="Fit slide to window"><FitIcon /></StatusItem>
      </StatusBar>
    </Frame>
  );
}
